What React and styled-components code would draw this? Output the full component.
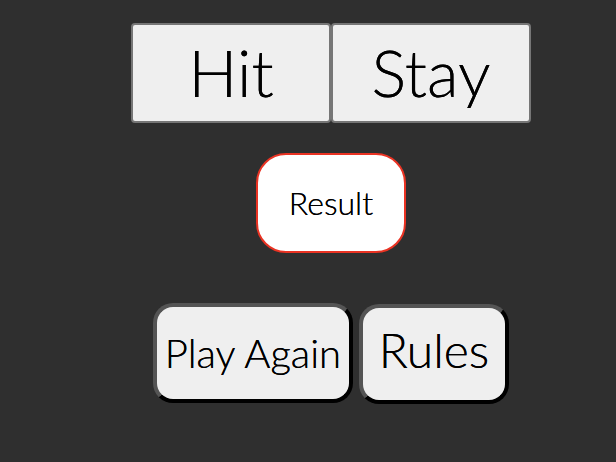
import React from "react";
import styled, { createGlobalStyle } from "styled-components";

const GlobalStyle = createGlobalStyle`
  * { box-sizing: border-box; }
  body {
    margin: 0;
    background: #2f2f2f;
    color: #000;
    font-family: Lato, "Open Sans", sans-serif;
    font-weight: 300;
    text-shadow: 0 0 0 #000;
  }
`;

const Table = styled.main`
  display: flex;
  flex-direction: column;
  align-items: center;
  padding: 23px 0 0 46px;
`;

const ButtonRow = styled.div`
  display: flex;
  align-items: baseline;
  gap: ${({ $gap }) => $gap || 0}px;
`;

const MoveButton = styled.button`
  width: 200px;
  height: 100px;
  padding: 0 0 2px;
  border: 2px solid #767676;
  border-radius: 4px;
  background: #efefef;
  color: #000;
  font: inherit;
  font-size: 65px;
  text-shadow: inherit;
`;

const Result = styled.output`
  display: flex;
  align-items: center;
  justify-content: center;
  width: 150px;
  height: 100px;
  margin: 30px 0 50px;
  padding-bottom: 2px;
  border: 2px solid #ea3323;
  border-radius: 30px;
  background: #fff;
  font-size: 32px;
`;

const GameButton = styled.button`
  width: ${({ $width }) => $width}px;
  height: 100px;
  padding: 0 0 ${({ $lift }) => $lift || 0}px;
  border: 4px outset #000;
  border-radius: 20px;
  background: #efefef;
  color: #000;
  font: inherit;
  font-size: ${({ $size }) => $size}px;
  text-shadow: inherit;
  white-space: nowrap;
`;

export default function App() {
  return (
    <>
      <GlobalStyle />
      <Table>
        <ButtonRow>
          <MoveButton type="button">Hit</MoveButton>
          <MoveButton type="button">Stay</MoveButton>
        </ButtonRow>
        <Result>Result</Result>
        <ButtonRow $gap={6}>
          <GameButton type="button" $width={200} $size={40}>Play Again</GameButton>
          <GameButton type="button" $width={150} $size={48} $lift={8}>Rules</GameButton>
        </ButtonRow>
      </Table>
    </>
  );
}
